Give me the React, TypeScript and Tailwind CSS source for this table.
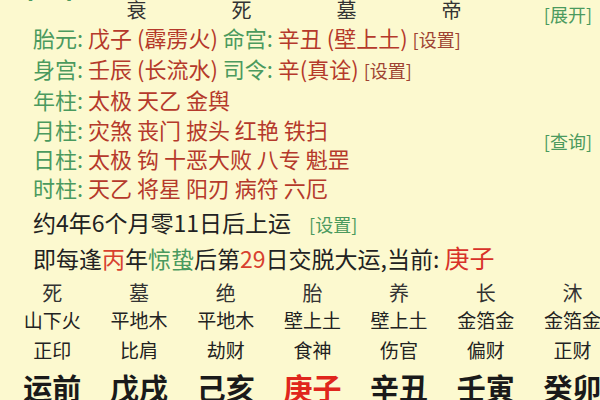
import React from 'react';

const font = { fontFamily: '"Noto Sans CJK SC", "Noto Sans", sans-serif' };

const pillarsTop = ['衰', '死', '墓', '帝'];

const shensha = [
  { label: '年柱', items: '太极 天乙 金舆' },
  { label: '月柱', items: '灾煞 丧门 披头 红艳 铁扫' },
  { label: '日柱', items: '太极 钩 十恶大败 八专 魁罡' },
  { label: '时柱', items: '天乙 将星 阳刃 病符 六厄' },
];

const dayun = [
  { stage: '死', nayin: '山下火', god: '正印', gz: '运前' },
  { stage: '墓', nayin: '平地木', god: '比肩', gz: '戊戌' },
  { stage: '绝', nayin: '平地木', god: '劫财', gz: '己亥' },
  { stage: '胎', nayin: '壁上土', god: '食神', gz: '庚子', now: true },
  { stage: '养', nayin: '壁上土', god: '伤官', gz: '辛丑' },
  { stage: '长', nayin: '金箔金', god: '偏财', gz: '壬寅' },
  { stage: '沐', nayin: '金箔金', god: '正财', gz: '癸卯' },
];

const Label = ({ children }: { children: React.ReactNode }) => (
  <span className="text-[#4b9a5e]">{children}</span>
);
const Val = ({ children }: { children: React.ReactNode }) => (
  <span className="text-[#b5392b]">{children}</span>
);
const Setting = () => (
  <span className="text-[18px] text-[#9e4232]">[设置]</span>
);

export default function App() {
  return (
    <div
      className="w-[600px] h-[400px] overflow-hidden bg-[#fcf9cf] text-[#222]"
      style={font}
    >
      {/* cut-off toggle from the row above */}
      <div className="-mt-[19px] h-[20px] pl-[27px] text-[17px] leading-[20px] text-[#4b9a5e]">
        [收起]
      </div>

      <div className="flex h-[20px] items-start">
        <div className="ml-[84px] grid grid-cols-[105px_105px_105px_105px] text-[20px] leading-[18px] text-[#333]">
          {pillarsTop.map((p) => (
            <div key={p} className="text-center">
              {p}
            </div>
          ))}
        </div>
        <div className="ml-auto mr-[8px] pt-[3px] text-[18px] leading-[20px] text-[#4b9a5e]">
          [展开]
        </div>
      </div>

      <div className="mt-[2px] flex">
        <div className="pl-[33px] text-[22px] leading-[29.2px] whitespace-nowrap">
          <div>
            <Label>胎元: </Label>
            <Val>戊子 (霹雳火) </Val>
            <Label>命宫: </Label>
            <Val>辛丑 (壁上土) </Val>
            <Setting />
          </div>
          <div>
            <Label>身宫: </Label>
            <Val>壬辰 (长流水) </Val>
            <Label>司令: </Label>
            <Val>辛(真诠) </Val>
            <Setting />
          </div>
          {shensha.map((s) => (
            <div key={s.label}>
              <Label>{s.label}: </Label>
              <Val>{s.items}</Val>
            </div>
          ))}
        </div>
        <div className="ml-auto mr-[8px] pt-[108px] text-[18px] leading-[20px] text-[#4b9a5e]">
          [查询]
        </div>
      </div>

      <div className="mt-[3px] pl-[33px] text-[23px] leading-[35px] whitespace-nowrap">
        <div>
          约4年6个月零11日后上运
          <span className="ml-[18px] text-[18px] text-[#4b9a5e]">[设置]</span>
        </div>
        <div className="-mt-[2px]">
          即每逢<span className="text-[#d8412f]">丙</span>年
          <span className="text-[#4b9a5e]">惊蛰</span>后第
          <span className="text-[#d8412f]">29</span>日交脱大运,当前:{' '}
          <span className="text-[25px] text-[#d8322a]">庚子</span>
        </div>
      </div>

      <div className="mt-[3px] ml-[9px] grid grid-cols-[86.7px_86.7px_86.7px_86.7px_86.7px_86.7px_86.7px] whitespace-nowrap">
        {dayun.map((d) => (
          <div key={d.gz} className="flex flex-col items-center">
            <div className="h-[28px] text-[20px] leading-[28px] text-[#333]">{d.stage}</div>
            <div className="h-[26px] text-[19px] leading-[26px] text-[#222]">{d.nayin}</div>
            <div className="h-[34px] text-[19px] leading-[34px] text-[#222]">{d.god}</div>
            <div
              className={
                d.now
                  ? 'h-[40px] text-[29px] font-bold leading-[40px] text-[#e0261c]'
                  : 'h-[40px] text-[29px] font-bold leading-[40px] text-[#1a1a1a]'
              }
            >
              {d.gz}
            </div>
          </div>
        ))}
      </div>
    </div>
  );
}
